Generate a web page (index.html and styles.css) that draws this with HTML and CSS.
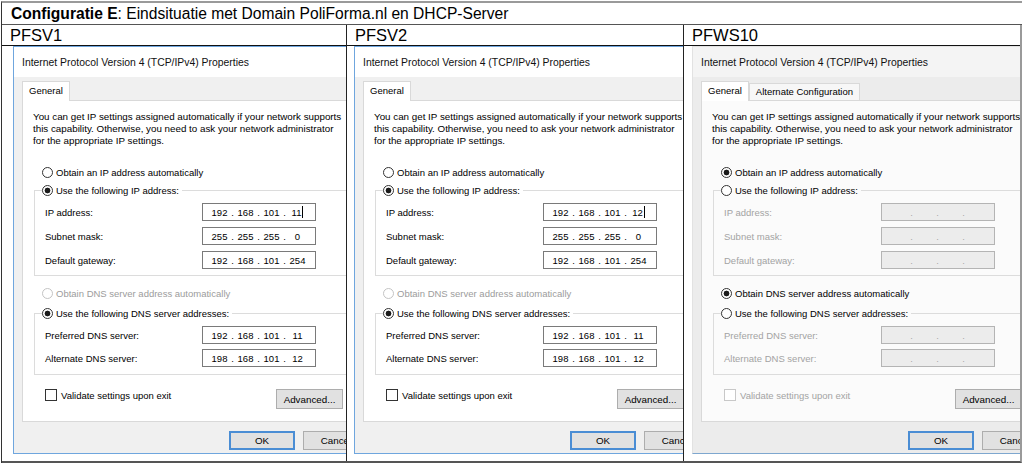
FILE: index.html
```html
<!DOCTYPE html>
<html lang="nl">
<head>
<meta charset="utf-8">
<title>Configuratie E</title>
<link rel="stylesheet" href="styles.css">
</head>
<body>
<div class="doc">
  <div class="title-row"><b>Configuratie E</b>: Eindsituatie met Domain PoliForma.nl en DHCP-Server</div>
  <div class="grid">
    <div class="hcell">PFSV1</div>
    <div class="hcell">PFSV2</div>
    <div class="hcell">PFWS10</div>

    <!-- PFSV1 -->
    <div class="cell c1">
      <div class="dlg">
        <div class="dlg-title">Internet Protocol Version 4 (TCP/IPv4) Properties</div>
        <div class="tabs"><div class="tab sel">General</div></div>
        <div class="panel">
          <p class="intro">You can get IP settings assigned automatically if your network supports<br>this capability. Otherwise, you need to ask your network administrator<br>for the appropriate IP settings.</p>
          <div class="opt first"><span class="radio"></span>Obtain an IP address automatically</div>
          <fieldset class="group g1">
            <legend><span class="radio on"></span>Use the following IP address:</legend>
            <div class="row"><span class="lbl">IP address:</span><span class="ip"><span class="oc">192</span><span class="dot">.</span><span class="oc">168</span><span class="dot">.</span><span class="oc">101</span><span class="dot">.</span><span class="oc">11<span class="caret"></span></span></span></div>
            <div class="row"><span class="lbl">Subnet mask:</span><span class="ip"><span class="oc">255</span><span class="dot">.</span><span class="oc">255</span><span class="dot">.</span><span class="oc">255</span><span class="dot">.</span><span class="oc">0</span></span></div>
            <div class="row"><span class="lbl">Default gateway:</span><span class="ip"><span class="oc">192</span><span class="dot">.</span><span class="oc">168</span><span class="dot">.</span><span class="oc">101</span><span class="dot">.</span><span class="oc">254</span></span></div>
          </fieldset>
          <div class="opt dns-auto off"><span class="radio"></span>Obtain DNS server address automatically</div>
          <fieldset class="group g2">
            <legend><span class="radio on"></span>Use the following DNS server addresses:</legend>
            <div class="row"><span class="lbl">Preferred DNS server:</span><span class="ip"><span class="oc">192</span><span class="dot">.</span><span class="oc">168</span><span class="dot">.</span><span class="oc">101</span><span class="dot">.</span><span class="oc">11</span></span></div>
            <div class="row"><span class="lbl">Alternate DNS server:</span><span class="ip"><span class="oc">198</span><span class="dot">.</span><span class="oc">168</span><span class="dot">.</span><span class="oc">101</span><span class="dot">.</span><span class="oc">12</span></span></div>
          </fieldset>
          <div class="bottom-row">
            <div class="check"><span class="box"></span>Validate settings upon exit</div>
            <div class="btn">Advanced...</div>
          </div>
        </div>
        <div class="actions"><div class="btn ok">OK</div><div class="btn">Cancel</div></div>
      </div>
    </div>

    <!-- PFSV2 -->
    <div class="cell c2">
      <div class="dlg">
        <div class="dlg-title">Internet Protocol Version 4 (TCP/IPv4) Properties</div>
        <div class="tabs"><div class="tab sel">General</div></div>
        <div class="panel">
          <p class="intro">You can get IP settings assigned automatically if your network supports<br>this capability. Otherwise, you need to ask your network administrator<br>for the appropriate IP settings.</p>
          <div class="opt first"><span class="radio"></span>Obtain an IP address automatically</div>
          <fieldset class="group g1">
            <legend><span class="radio on"></span>Use the following IP address:</legend>
            <div class="row"><span class="lbl">IP address:</span><span class="ip"><span class="oc">192</span><span class="dot">.</span><span class="oc">168</span><span class="dot">.</span><span class="oc">101</span><span class="dot">.</span><span class="oc">12<span class="caret"></span></span></span></div>
            <div class="row"><span class="lbl">Subnet mask:</span><span class="ip"><span class="oc">255</span><span class="dot">.</span><span class="oc">255</span><span class="dot">.</span><span class="oc">255</span><span class="dot">.</span><span class="oc">0</span></span></div>
            <div class="row"><span class="lbl">Default gateway:</span><span class="ip"><span class="oc">192</span><span class="dot">.</span><span class="oc">168</span><span class="dot">.</span><span class="oc">101</span><span class="dot">.</span><span class="oc">254</span></span></div>
          </fieldset>
          <div class="opt dns-auto off"><span class="radio"></span>Obtain DNS server address automatically</div>
          <fieldset class="group g2">
            <legend><span class="radio on"></span>Use the following DNS server addresses:</legend>
            <div class="row"><span class="lbl">Preferred DNS server:</span><span class="ip"><span class="oc">192</span><span class="dot">.</span><span class="oc">168</span><span class="dot">.</span><span class="oc">101</span><span class="dot">.</span><span class="oc">11</span></span></div>
            <div class="row"><span class="lbl">Alternate DNS server:</span><span class="ip"><span class="oc">198</span><span class="dot">.</span><span class="oc">168</span><span class="dot">.</span><span class="oc">101</span><span class="dot">.</span><span class="oc">12</span></span></div>
          </fieldset>
          <div class="bottom-row">
            <div class="check"><span class="box"></span>Validate settings upon exit</div>
            <div class="btn">Advanced...</div>
          </div>
        </div>
        <div class="actions"><div class="btn ok">OK</div><div class="btn">Cancel</div></div>
      </div>
    </div>

    <!-- PFWS10 -->
    <div class="cell c3">
      <div class="dlg gray">
        <div class="dlg-title">Internet Protocol Version 4 (TCP/IPv4) Properties</div>
        <div class="tabs"><div class="tab sel">General</div><div class="tab">Alternate Configuration</div></div>
        <div class="panel">
          <p class="intro">You can get IP settings assigned automatically if your network supports<br>this capability. Otherwise, you need to ask your network administrator<br>for the appropriate IP settings.</p>
          <div class="opt first"><span class="radio on"></span>Obtain an IP address automatically</div>
          <fieldset class="group g1 dis">
            <legend><span class="radio"></span>Use the following IP address:</legend>
            <div class="row"><span class="lbl">IP address:</span><span class="ip"><span class="oc"></span><span class="dot">.</span><span class="oc"></span><span class="dot">.</span><span class="oc"></span><span class="dot">.</span><span class="oc"></span></span></div>
            <div class="row"><span class="lbl">Subnet mask:</span><span class="ip"><span class="oc"></span><span class="dot">.</span><span class="oc"></span><span class="dot">.</span><span class="oc"></span><span class="dot">.</span><span class="oc"></span></span></div>
            <div class="row"><span class="lbl">Default gateway:</span><span class="ip"><span class="oc"></span><span class="dot">.</span><span class="oc"></span><span class="dot">.</span><span class="oc"></span><span class="dot">.</span><span class="oc"></span></span></div>
          </fieldset>
          <div class="opt dns-auto"><span class="radio on"></span>Obtain DNS server address automatically</div>
          <fieldset class="group g2 dis">
            <legend><span class="radio"></span>Use the following DNS server addresses:</legend>
            <div class="row"><span class="lbl">Preferred DNS server:</span><span class="ip"><span class="oc"></span><span class="dot">.</span><span class="oc"></span><span class="dot">.</span><span class="oc"></span><span class="dot">.</span><span class="oc"></span></span></div>
            <div class="row"><span class="lbl">Alternate DNS server:</span><span class="ip"><span class="oc"></span><span class="dot">.</span><span class="oc"></span><span class="dot">.</span><span class="oc"></span><span class="dot">.</span><span class="oc"></span></span></div>
          </fieldset>
          <div class="bottom-row">
            <div class="check off"><span class="box"></span>Validate settings upon exit</div>
            <div class="btn">Advanced...</div>
          </div>
        </div>
        <div class="actions"><div class="btn ok">OK</div><div class="btn">Cancel</div></div>
      </div>
    </div>
  </div>
</div>
</body>
</html>
```

FILE: styles.css
```css
* { box-sizing: border-box; }
html, body { margin: 0; padding: 0; background: #fff; }
body { width: 1024px; height: 464px; overflow: hidden; }

.doc {
  margin: 1px 0 0 1px;
  width: 1021px;
  border-top: 2px solid #9a9a9a;
  border-left: 1px solid #333;
  font-family: "Liberation Sans", Arial, sans-serif;
  color: #000;
}

.title-row {
  height: 22px;
  padding-left: 9px;
  font-size: 15.6px;
  line-height: 21px;
  border-bottom: 1px solid #555;
  white-space: nowrap;
}

.grid {
  display: grid;
  grid-template-columns: 344px 337px 337px;
  grid-template-rows: 20px 416px;
  border-right: 2px solid #9a9a9a;
  border-bottom: 2px solid #555;
}

.hcell {
  font-size: 16.5px;
  line-height: 20px;
  padding-left: 8px;
  border-bottom: 1px solid #111;
  height: 21px;
}
.hcell:nth-child(2), .hcell:nth-child(3),
.cell.c2, .cell.c3 { border-left: 1px solid #222; }

.cell {
  overflow: hidden;
  padding-top: 1px;
}
.cell.c1 { padding-left: 11px; }
.cell.c2 { padding-left: 7px; }
.cell.c3 { padding-left: 8px; }

/* ---------- dialog ---------- */
.dlg {
  width: 420px;
  background: #f0f0f0;
  border: 1px solid #6fa6de;
  border-right: none;
  font-family: "Liberation Sans", Arial, sans-serif;
  font-size: 9.5px;
  color: #000;
  white-space: nowrap;
}
.dlg.gray {
  border-color: #e2e2e2;
  border-bottom-color: #7ea7cf;
  background: #ececec;
}
.dlg-title {
  height: 30px;
  background: #fff;
  padding-left: 8px;
  display: flex;
  align-items: center;
  font-size: 10.4px;
  color: #111;
}
.dlg.gray .dlg-title { background: #f4f4f4; }

.tabs {
  display: flex;
  align-items: flex-end;
  padding: 4px 0 0 8px;
  height: 23px;
}
.tab {
  height: 17px;
  padding: 0 6px;
  border: 1px solid #d9d9d9;
  border-bottom: none;
  background: #f7f7f7;
  line-height: 16px;
  margin-bottom: 0;
}
.tab.sel {
  position: relative;
  height: 20px;
  margin-bottom: -1px;
  background: #fff;
  line-height: 18px;
  z-index: 1;
}

.panel {
  margin-left: 8px;
  height: 322px;
  background: #fff;
  border: 1px solid #d9d9d9;
  padding: 10px 0 0 10px;
}
.dlg.gray .panel { background: #fbfbfb; }

.intro {
  margin: 0;
  line-height: 12px;
  font-size: 9.8px;
}

.opt {
  display: flex;
  align-items: center;
  height: 14px;
  padding-left: 9px;
}
.opt.first { margin-top: 18px; }
.opt.dns-auto { margin-top: 10px; }
.opt.off { color: #9c9c9c; }

.radio {
  width: 11px;
  height: 11px;
  border: 1px solid #333;
  border-radius: 50%;
  background: #fff;
  margin-right: 3px;
  flex: none;
  display: inline-block;
}
.radio.on { background: radial-gradient(circle, #1a1a1a 0 2.6px, #fff 3.2px); }
.opt.off .radio { border-color: #c4c4c4; }

.group {
  margin: 4px 0 0 1px;
  padding: 6px 0 6px 10px;
  border: 1px solid #dcdcdc;
  border-right: none;
  min-inline-size: 0;
}
.group.g2 { margin-top: 6px; padding-bottom: 7px; }
.group legend {
  display: flex;
  align-items: center;
  height: 14px;
  padding: 0 3px 0 0;
  margin-left: -3px;
}
.group .row {
  display: flex;
  align-items: center;
  height: 18px;
}
.group .row + .row { margin-top: 6px; }
.group.g2 .row + .row { margin-top: 5px; }

.lbl { flex: 0 0 157px; }
.group.dis .lbl { color: #a3a3a3; }

.ip {
  flex: 0 0 114px;
  height: 18px;
  border: 1px solid #7a7a7a;
  background: #fff;
  display: flex;
  align-items: center;
  padding-left: 6px;
}
.group.dis .ip { background: #ececec; border-color: #b4b4b4; color: #a8a8a8; }
.oc { width: 21px; text-align: center; }
.dot { width: 5px; text-align: center; }
.caret {
  display: inline-block;
  width: 1px;
  height: 12px;
  background: #000;
  margin-left: 1px;
  vertical-align: -2px;
}

.bottom-row {
  display: flex;
  align-items: flex-start;
  margin-top: 14px;
  padding-left: 12px;
}
.check {
  flex: 0 0 231px;
  display: flex;
  align-items: center;
  height: 12px;
}
.check .box {
  width: 12px;
  height: 12px;
  border: 1px solid #333;
  background: #fff;
  margin-right: 4px;
}
.check.off { color: #a3a3a3; }
.check.off .box { border-color: #c8c8c8; }

.btn {
  width: 67px;
  height: 20px;
  background: #e1e1e1;
  border: 1px solid #adadad;
  display: flex;
  align-items: center;
  justify-content: center;
  font-size: 9.8px;
}

.actions {
  display: flex;
  gap: 8px;
  padding: 9px 0 3px 215px;
}
.actions .btn { width: 66px; height: 19px; }
.actions .btn.ok { border: 2px solid #4a8dd4; }
```
